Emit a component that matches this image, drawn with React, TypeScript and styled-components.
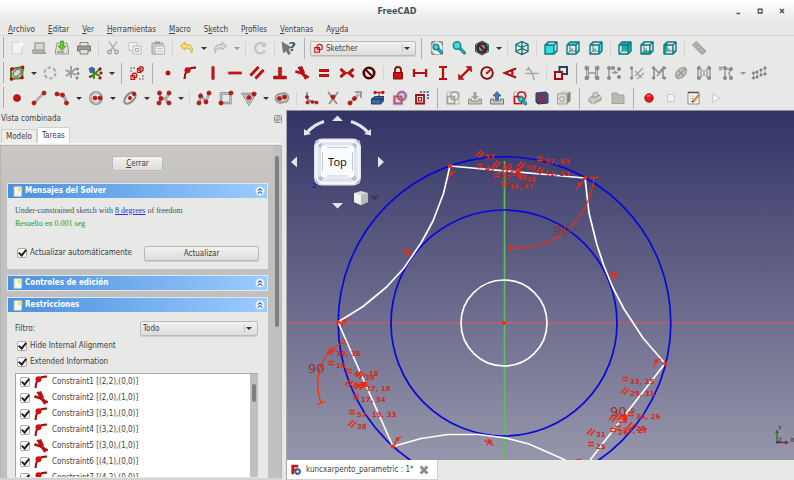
import React from "react";
import styled, { createGlobalStyle, css } from "styled-components";

const Global = createGlobalStyle`
  * { box-sizing: border-box; }
  body {
    margin: 0;
    background: #e8e8e6;
    color: #3c4143;
    font-family: "DejaVu Sans Condensed", "DejaVu Sans", sans-serif;
    font-size: 8px;
    line-height: 10px;
  }
  button, select, input { font: inherit; color: inherit; margin: 0; }
`;

/* ---------- window frame ---------- */

const Window = styled.div`
  display: flex;
  flex-direction: column;
  height: 100vh;
  overflow: hidden;
`;

const Head = styled.header`
  background: linear-gradient(#ffffff, #e8e8e6 22px);
`;

const TitleBar = styled.div`
  display: grid;
  grid-template-columns: 1fr auto 1fr;
  align-items: center;
  height: 22px;
`;

const Title = styled.h1`
  grid-column: 2;
  margin: 0;
  font: bold 9px/12px "DejaVu Sans Condensed", "DejaVu Sans", sans-serif;
  color: #43555c;
`;

const WindowButtons = styled.div`
  display: flex;
  justify-content: flex-end;
  gap: 14px;
  padding-right: 8px;
`;

const PlainButton = styled.button`
  display: flex;
  padding: 0;
  border: 0;
  background: none;
`;

const MenuBar = styled.nav`
  display: flex;
  gap: 13px;
  height: 14px;
  padding: 2px 8px 0;
  border-bottom: 1px solid #d5d5d2;
`;

const MenuItem = styled.button`
  padding: 0;
  border: 0;
  background: none;
  line-height: 10px;
`;

/* ---------- toolbars ---------- */

const ToolBars = styled.div`
  display: grid;
  grid-auto-rows: 25px;
  margin-bottom: -1px;
`;

const ToolRow = styled.div`
  display: flex;
  align-items: center;
  padding: 0 0 1px 6px;
  background: linear-gradient(#aaa, #aaa) 3px 1px / 1px 21px no-repeat;
`;

const Group = styled.div<{ $w: number }>`
  display: flex;
  flex: 0 0 ${(p) => p.$w}px;
`;

const Tool = styled.button`
  display: flex;
  flex: 1;
  justify-content: center;
  padding: 0;
  border: 0;
  background: none;
`;

const Sep = styled.span<{ $strong?: boolean }>`
  flex: 0 0 ${(p) => (p.$strong ? 9 : 7)}px;
  height: ${(p) => (p.$strong ? 21 : 15)}px;
  background: linear-gradient(${(p) => (p.$strong ? "#b0b0ae, #b0b0ae" : "#d4d4d2, #d4d4d2")}) center / 1px 100% no-repeat;
`;

const MoreButton = styled.button<{ $dim?: boolean }>`
  display: flex;
  justify-content: center;
  flex: 0 0 11px;
  padding: 0;
  border: 0;
  background: none;
  &::before {
    content: "";
    border: 3px solid transparent;
    border-bottom: 0;
    border-top: 3px solid ${(p) => (p.$dim ? "#999" : "#333")};
  }
`;

const raised = css`
  border: 1px solid #b9b9b7;
  border-radius: 2px;
  background: linear-gradient(#f2f2f1, #dcdcda);
  box-shadow: 0 1px 0 #cfcfcd;
`;

const Combo = styled.div<{ $icon?: boolean }>`
  position: relative;
  flex: 0 0 ${(p) => (p.$icon ? 106 : 118)}px;
  margin: 0 ${(p) => (p.$icon ? 1 : 0)}px;
  select {
    ${raised}
    appearance: none;
    display: block;
    width: 100%;
    height: 15px;
    padding: 0 16px 0 ${(p) => (p.$icon ? 15 : 2)}px;
    line-height: 13px;
  }
  svg {
    position: absolute;
    left: 3px;
    top: 2px;
  }
  &::after {
    content: "";
    position: absolute;
    right: 6px;
    top: 6px;
    border: 3px solid transparent;
    border-bottom: 0;
    border-top: 3px solid #333;
    pointer-events: none;
  }
  &::before {
    content: "";
    position: absolute;
    right: 13px;
    top: 4px;
    width: 1px;
    height: 7px;
    background: #c2c2c0;
  }
`;

/* ---------- dock ---------- */

const Work = styled.main`
  display: flex;
  flex: 1;
  min-height: 0;
`;

const Dock = styled.aside`
  display: flex;
  flex-direction: column;
  flex: 0 0 282px;
  margin-right: 4px;
  border-bottom: 2px solid #d3d3d1;
`;

const DockTitle = styled.div`
  display: flex;
  align-items: center;
  justify-content: space-between;
  height: 17px;
  padding: 0 0 0 1px;
`;

const Tabs = styled.div`
  display: flex;
  align-items: flex-end;
  height: 17px;
  padding-left: 1px;
  border-bottom: 1px solid #f6f6f5;
`;

const Tab = styled.button<{ $active?: boolean }>`
  height: ${(p) => (p.$active ? 16 : 14)}px;
  padding: 0 4px;
  border: 1px solid #cfcfcd;
  border-bottom: 0;
  border-radius: 2px 2px 0 0;
  background: ${(p) => (p.$active ? "#fff" : "#eeeeed")};
`;

const TaskArea = styled.div`
  display: flex;
  flex: 1;
  min-height: 0;
  margin-top: 1px;
  border: 1px solid #b5b5b3;
  border-width: 1px 1px 0;
  background: linear-gradient(#cbc7c4, #bfc0bf 60px);
`;

const Tasks = styled.div`
  display: flex;
  flex-direction: column;
  flex: 1;
  gap: 6px;
  min-width: 0;
  padding: 10px 5px 0 6px;
  overflow: hidden;
`;

const Track = styled.div`
  flex: 0 0 8px;
  padding: 10px 2px 0;
  background: #bfc1c0;
`;

const Thumb = styled.div<{ $h: string }>`
  height: ${(p) => p.$h};
  border-radius: 2px;
  background: #7b8081;
`;

const PushButton = styled.button`
  ${raised}
  height: 15px;
  padding: 0 13px;
  line-height: 13px;
`;

const CloseButton = styled(PushButton)`
  align-self: center;
  margin-bottom: 6px;
`;

const Section = styled.section<{ $fill?: boolean }>`
  display: flex;
  flex-direction: column;
  flex: ${(p) => (p.$fill ? "1" : "none")};
  min-height: 0;
  background: #e8e8e6;
  border: 1px solid #dfe7f0;
  border-bottom-color: #e8e8e6;
`;

const SectionHead = styled.h2`
  display: flex;
  align-items: center;
  gap: 2px;
  height: 14px;
  margin: 0;
  padding: 0 2px 0 4px;
  background: linear-gradient(90deg, #4a90dc, #9ccbff);
  color: #fff;
  font-size: 8px;
  font-weight: bold;
  span { flex: 1; }
`;

const SolverBody = styled.div`
  padding: 8px 8px 7px 7px;
`;

const Message = styled.p<{ $ok?: boolean }>`
  margin: 0;
  padding-bottom: ${(p) => (p.$ok ? 16 : 3)}px;
  font: 8px/10px "Liberation Serif", serif;
  color: ${(p) => (p.$ok ? "#1f9a24" : "#4b4f50")};
  a { color: #2f2fe0; }
`;

const Row = styled.div`
  display: flex;
  align-items: center;
  justify-content: space-between;
`;

const WideButton = styled(PushButton)`
  flex: 0 0 115px;
`;

const Check = styled.label`
  display: flex;
  align-items: center;
  gap: 3px;
  height: 16px;
`;

const Box = styled.input`
  appearance: none;
  display: flex;
  flex: none;
  align-items: center;
  justify-content: center;
  width: 10px;
  height: 10px;
  margin: 0 0 0 2px;
  border: 1px solid #a9a9a7;
  border-radius: 2px;
  background: #fdfdfd;
  &:checked::before {
    content: "";
    width: 3px;
    height: 6px;
    margin-bottom: 2px;
    border: solid #222;
    border-width: 0 2px 2px 0;
    transform: rotate(40deg);
  }
`;

const FilterBody = styled.div`
  display: flex;
  flex-direction: column;
  flex: 1;
  min-height: 0;
  padding: 9px 9px 0 7px;
`;

const FilterRow = styled(Row)`
  margin-bottom: 2px;
`;

const ListFrame = styled.div`
  display: flex;
  flex: 1;
  min-height: 0;
  margin-top: 3px;
  border: 1px solid #a9a9a7;
  border-width: 1px 0 0 1px;
  background: #fff;
`;

const List = styled.ul`
  flex: 1;
  margin: 0;
  padding: 0 2px;
  overflow: hidden;
  list-style: none;
`;

/* ---------- drawing area ---------- */

const Mdi = styled.div`
  display: flex;
  flex-direction: column;
  flex: 1;
  min-width: 0;
  border-left: 1px solid #a9a9ad;
`;

const Scene = styled.div`
  flex: 1;
  min-height: 0;
  border-top: 1px solid #8c8ca0;
  background: linear-gradient(#333366, #9696ab);
  svg { display: block; width: 100%; height: 100%; }
`;

const DocBar = styled.div`
  display: flex;
  height: 20px;
`;

const DocTab = styled.div`
  display: flex;
  align-items: center;
  gap: 5px;
  height: 20px;
  padding: 0 8px 0 3px;
  border: 1px solid #d0d0ce;
  border-top: 0;
  border-left: 0;
  background: #fff;
`;

/* ---------- icons ---------- */

const RED = "#cc1111";
const DK = "#7c0a0a";
const GR = "#959592";

const Svg = ({ children, s = 16 }: { children: React.ReactNode; s?: number }) => (
  <svg width={s} height={s} viewBox="0 0 16 16" fill="none" aria-hidden="true">
    {children}
  </svg>
);

const Dots = ({ at, r = 2.1, c = RED, e = DK }: { at: number[][]; r?: number; c?: string; e?: string }) => (
  <>
    {at.map(([x, y], i) => (
      <circle key={i} cx={x} cy={y} r={r} fill={c} stroke={e} strokeWidth=".5" />
    ))}
  </>
);

const Bar = ({ d, w = 1.8, c = RED, e = DK }: { d: string; w?: number; c?: string; e?: string }) => (
  <>
    <path d={d} stroke={e} strokeWidth={w + 0.7} />
    <path d={d} stroke={c} strokeWidth={w} />
  </>
);

const Rail = ({ d }: { d: string }) => (
  <>
    <path d={d} stroke="#858583" strokeWidth="2.4" />
    <path d={d} stroke="#c4c4c2" strokeWidth="1.2" />
  </>
);

const GDots = ({ at, r = 1.7 }: { at: number[][]; r?: number }) => <Dots at={at} r={r} c="#8c8c8a" e="#777775" />;

const No = () => (
  <>
    <circle cx="8" cy="8" r="4.500" stroke="#3a0505" strokeWidth="2.600" />
    <circle cx="8" cy="8" r="4.500" stroke="#a01010" strokeWidth="1.400" />
    <path d="M5 5 11 11" stroke="#7a0808" strokeWidth="1.800" />
  </>
);

const Lens = ({ x = 7, y = 7, r = 3 }: { x?: number; y?: number; r?: number }) => (
  <>
    <path d={`M${x + r * 0.6} ${y + r * 0.6} L${x + r * 2} ${y + r * 2}`} stroke="#0d6c72" strokeWidth="3.2" strokeLinecap="round" />
    <path d={`M${x + r * 0.6} ${y + r * 0.6} L${x + r * 2} ${y + r * 2}`} stroke="#1cb8bd" strokeWidth="1.8" strokeLinecap="round" />
    <circle cx={x} cy={y} r={r} fill="#53d5d8" stroke="#128c91" strokeWidth="1.6" />
  </>
);

const faces: Record<string, string> = {
  front: "M2 5H11V14H2Z",
  top: "M2 5 5 2H14L11 5Z",
  right: "M11 5 14 2V11L11 14Z",
  rear: "M5 2H14V11H5Z",
  bottom: "M2 14 5 11H14L11 14Z",
  left: "M2 5 5 2V11L2 14Z",
};

const Cube = ({ face, mark }: { face: string; mark?: boolean }) => (
  <>
    <path d="M5 2V11M5 11H14M5 11 2 14" stroke="#2a9ba0" strokeWidth="1" />
    <path d={faces[face]} fill={face === "left" || face === "rear" || face === "bottom" ? "#19aeb4" : "#2ce0e4"} />
    <path d="M2 5H11V14H2ZM2 5 5 2H14L11 5M14 2V11L11 14" stroke="#0f777c" strokeWidth="1.4" strokeLinejoin="round" />
    {mark && <path d="M5 8 8 11M8 8 5 11.5" stroke="#777" strokeWidth=".8" />}
  </>
);

const Sketch = ({ c = RED, e = "none" }: { c?: string; e?: string }) => (
  <>
    <path d="M2.5 6.500H9.500V13.500H2.500Z" stroke={c} strokeWidth="1.6" />
    <circle cx="9.500" cy="6" r="4" stroke={c} strokeWidth="1.6" fill={e} fillOpacity=".4" />
    <path d="M6 10 10 6" stroke={c} strokeWidth="1" />
  </>
);

const Corner = () => (
  <>
    <path d="M2.500 14Q2.500 9 5 5.500 8 2.500 14 2.500" stroke={DK} strokeWidth="2" />
    <path d="M2.800 13.500Q3 9 5.500 6 8 3 13.500 2.700" stroke={RED} strokeWidth="1" />
    <circle cx="5.500" cy="5.200" r="3" fill={RED} />
  </>
);

const Tangent = () => (
  <>
    <Bar d="M1.500 6.500 7 8 14.500 12.500" w={1.8} />
    <Bar d="M4.500 2 8 7.500 12 14M7 1.500 10 8" w={1.5} />
  </>
);

const I: Record<string, React.ReactNode> = {
  new: (<><path d="M3 2H10L13 5V14H3Z" fill="#f2f2f0" stroke="#cececb" /><path d="M12 1V7M9 4H15" stroke="#fafafa" strokeWidth="2" /></>),
  open: (<><path d="M4 3H13V11H4Z" fill="#d6d6d3" stroke="#a4a4a1" strokeWidth="1.500" /><path d="M1 10H12L15 13.500H2Z" fill="#b2b2af" stroke="#9a9a97" /></>),
  save: (<><path d="M3 3H13L14.500 11V14H1.500V11Z" fill="#dededb" stroke="#999996" /><path d="M3 12H10" stroke="#72726f" /><path d="M6.500 1H9.500V6H12L8 10.500 4 6H6.500Z" fill="#6cc92a" stroke="#439410" strokeWidth=".7" /></>),
  print: (<><path d="M4 2.500H12V7H4Z" fill="#e9e9e7" stroke="#888885" /><path d="M1.500 6H14.500V11H1.500Z" fill="#9b9b98" stroke="#767673" /><path d="M4 9.500H12V14H4Z" fill="#dededb" stroke="#858582" /></>),
  cut: (<><path d="M4 1.500 10.500 11M12 1.500 5.500 11" stroke="#b4b4b1" strokeWidth="1.500" /><circle cx="4.500" cy="12" r="1.800" stroke="#9b9b98" strokeWidth="1.300" /><circle cx="11.500" cy="12" r="1.800" stroke="#9b9b98" strokeWidth="1.300" /></>),
  copy: (<><path d="M2 2.500H10V10.500H2Z" fill="#f1f1ef" stroke="#c5c5c2" /><path d="M6 6H14V14H6Z" fill="#f1f1ef" stroke="#bbbbb8" /><path d="M8.500 8.500H11.500V11.500H8.500Z" stroke="#aaaaa7" /></>),
  paste: (<><path d="M2 3H13V14H2Z" fill="#c9c9c6" stroke="#a3a3a0" /><path d="M5 1.500H10V4H5Z" fill="#999" /><path d="M5 6H14.500V14H5Z" fill="#efefed" stroke="#b5b5b2" /><path d="M7 8.500H12.500M7 11H12.500" stroke="#c2c2bf" /></>),
  undo: (<><path d="M1.500 6 6 2V4.500C12 4 15 7.500 12.500 13 12.500 9.500 10 8 6 8V10Z" fill="#f6e26b" stroke="#c9ab2c" strokeWidth=".9" /></>),
  redo: (<><path d="M14.500 6 10 2V4.500C4 4 1 7.500 3.500 13 3.500 9.500 6 8 10 8V10Z" fill="#d9d9d6" stroke="#aaaaa7" strokeWidth=".9" /></>),
  refresh: (<><path d="M12.500 5A5.200 5.200 0 1 0 13 10.500" stroke="#c4c4c1" strokeWidth="2.400" /><path d="M14 1.500V7H8.500Z" fill="#c4c4c1" /></>),
  whats: (<><path d="M1 2 10 7.500 7 9 9.500 13.500 7.500 14.500 5 10.500 2.500 13Z" fill="#777" stroke="#555" strokeWidth=".6" /><text x="7.500" y="11" fontSize="13" fontWeight="bold" fill="#3c5678" fontFamily="DejaVu Sans">?</text></>),
  fit: (<><path d="M2.500 1.500H13.500V14.500H2.500Z" fill="#f0f0ee" stroke="#b4b4b1" /><path d="M3 5V2H6M10 2H13V5M3 11V14H6" stroke="#6b6b68" /><Lens x={7} y={7} r={2.8} /></>),
  zoom: <Lens x={6} y={5.500} r={3.700} />,
  style: (<><path d="M8 1 14.500 4.500V11.500L8 15 1.500 11.500V4.500Z" fill="#2fb4b9" stroke="#147177" /><No /></>),
  iso: (<><path d="M8 1.500 14 4.500V11.500L8 14.500 2 11.500V4.500ZM2 4.500 8 7.500 14 4.500M8 7.500V14.500M8 1.500V8M2 11.500 8 8.500 14 11.500" stroke="#0d6c72" strokeWidth="1.300" /><path d="M3 5 8 7.500 13 5" stroke="#37b9be" strokeWidth=".6" /></>),
  measure: (<><path d="M1.500 5 5 1.500 14.500 10.500V12L11 14.500Z" fill="#b5b5b2" stroke="#969693" /><path d="M5 7 7 5M7.500 9.500 9.500 7.500M10 12 12 10" stroke="#858582" strokeWidth=".8" /></>),

  newSketch: (<><path d="M2 4 14 2 13 13 2 14Z" fill="#d6d9d4" stroke="#4c8a17" strokeWidth="2" /><ellipse cx="8" cy="8" rx="4.500" ry="2.800" transform="rotate(-40 8 8)" stroke="#777" strokeWidth="1.300" /><Dots at={[[3, 4], [13.500, 2.500], [2.500, 14], [13, 12.500]]} r={1.600} /></>),
  leave: (<><circle cx="8" cy="8" r="5.500" stroke="#ababa8" strokeWidth="2.200" strokeDasharray="3.500 2.200" /></>),
  burst: (<><path d="M7 1V13M1.500 5 12 10M12 3.500 2 11" stroke="#9a9a97" strokeWidth="1.800" /><GDots at={[[13.500, 4], [14, 8.500], [13, 13]]} r={1.200} /></>),
  burstC: (<><path d="M7 3V14M3 6 13 11M14 3 4 12" stroke="#3e9320" strokeWidth="2" /><path d="M1.500 3.500 5 1.500 8 4 7 8 3 8Z" fill="#3c6a9f" /><path d="M2 12 5 11" stroke="#aa2211" strokeWidth="2" /><Dots at={[[13, 4], [14, 8], [13, 13]]} r={1.300} /></>),
  valid: (<><path d="M2 7V3H6M10 14H14V10" stroke="#888" strokeWidth="1.400" strokeDasharray="2 1" /><path d="M8.500 3.500H12V7.500H8.500ZM2 10.500H5.500V14.500H2Z" stroke={RED} strokeWidth="1.200" /><circle cx="12" cy="4" r="2.300" stroke={RED} strokeWidth="1.200" /><circle cx="5.500" cy="10.500" r="2.300" stroke={RED} strokeWidth="1.200" /></>),
  cPoint: <Dots at={[[8, 8]]} r={2.2} />,
  cOn: <Corner />,
  cV: <Bar d="M8 1.500V14.500" w={2.200} />,
  cH: <Bar d="M1.500 8H14.500" w={2} />,
  cPar: <><Bar d="M1.500 10.500 9.500 2" w={2} /><Bar d="M6.500 13.500 14.500 5" w={2} /></>,
  cPerp: <Bar d="M8 2V12.500M1.500 12.500H14.500" w={2.600} />,
  cTan: <Tangent />,
  cEq: <Bar d="M3 5.500H13M3 10.500H13" w={2.400} />,
  cSym: <><Bar d="M1.500 4 6 8 1.500 12M14.500 4 10 8 14.500 12" w={2.200} /><circle cx="8" cy="8" r="1" fill={RED} /></>,
  cBlock: (<><circle cx="8" cy="8" r="5.200" stroke="#300" strokeWidth="2.600" /><circle cx="8" cy="8" r="5.200" stroke="#700" strokeWidth="1" /><path d="M4.500 4.500 11.500 11.500" stroke="#500" strokeWidth="2" /></>),
  lock: (<><path d="M5 8V5Q5 2 8 2 11 2 11 5V8" stroke="#8c0d0d" strokeWidth="1.800" /><path d="M3.500 7.500H12.500V14H3.500Z" fill={RED} stroke={DK} /></>),
  hDist: <Bar d="M2 4V12M14 4V12M2 8H14" w={1.500} />,
  vDist: <Bar d="M4 2H12M4 14H12M8 2V14" w={1.500} />,
  dist: (<><Bar d="M4 12 12 4" w={1.600} /><path d="M14.500 1.500V7L9 1.500ZM1.500 14.500V9L7 14.500Z" fill={RED} stroke={DK} strokeWidth=".5" /></>),
  radius: (<><circle cx="8" cy="8" r="5.800" stroke={DK} strokeWidth="1.800" /><path d="M8 8 11.500 5" stroke={RED} strokeWidth="1.800" /><circle cx="8" cy="8" r="1.300" fill={RED} /></>),
  angle: <Bar d="M14 3.500 2.500 8 14 12.500M9.500 5.500Q11.500 8 9.500 10.500" w={1.300} />,
  snell: (<><path d="M1 8.500H15M4 2 8.500 8.500 10 15M2 5 6 4" stroke="#a8a8a5" strokeWidth="1.500" /></>),
  ref: (<><path d="M6.500 2H14V9H6.500Z" stroke="#27406b" strokeWidth="2" /><path d="M2 7H9V14H2Z" stroke="#a51010" strokeWidth="2" fill="#e8e8e6" /></>),
  g1: (<><Rail d="M3.500 3V13M12.500 3V13" /><path d="M4 8H12" stroke={GR} strokeWidth="1.500" /><GDots at={[[2.800, 3], [2.800, 13], [13.200, 3], [13.200, 13]]} r={2} /></>),
  g2: (<><path d="M3 4V12M6 7.500H12M9 5.500V9" stroke={GR} strokeWidth="1.500" /><GDots at={[[3, 3], [3, 13], [7, 3], [13, 4], [13, 12]]} /></>),
  g3: (<><path d="M3 2V14M6 11 14 3M8 14 15 8M6 6 13 13" stroke="#a6a6a3" strokeWidth="1.600" /><GDots at={[[2.500, 3], [2.500, 13]]} r={1.300} /></>),
  g4: (<><path d="M3 14V3L8 8 12 3V14M6 11 13 3" stroke="#949491" strokeWidth="1.700" /><GDots at={[[2.500, 3], [13.500, 3], [2.500, 13], [13.500, 13]]} r={1.300} /></>),
  g5: (<><ellipse cx="8" cy="8" rx="6.500" ry="4" transform="rotate(-45 8 8)" fill="#c8c8c5" stroke="#a3a3a0" strokeWidth="1.500" /><path d="M4 12 12 4M6 6 11 11" stroke={GR} strokeWidth="1.500" /></>),
  g6: (<><path d="M2 3V13M6 4Q3.500 8 6 12M14 3V13M10 4Q12.500 8 10 12M8 5V11" stroke={GR} strokeWidth="1.300" /><GDots at={[[3, 3], [3, 13], [13, 3], [13, 13]]} /></>),
  g7: (<><path d="M1 2.500H5M1 4.500H4M7 4V12M7 4H14M13 5Q9 8 13 12" stroke={GR} strokeWidth="1.400" /><GDots at={[[7, 3], [7, 13], [13, 4], [13, 13]]} /></>),
  g8: (<><path d="M2.500 8V13M6 7V12M10 5V10M14 3V9" stroke="#aaa" /><GDots at={[[2.500, 8], [2.500, 13], [6, 7], [6, 12], [10, 5], [10, 10], [14, 3], [14, 9]]} r={1.300} /></>),

  point: <Dots at={[[8, 8]]} r={3.600} />,
  line: <><Rail d="M3 13 13 3" /><Dots at={[[3, 13], [13, 3]]} /></>,
  arc: <><Rail d="M3 4Q11 4 12.500 12.500" /><Dots at={[[3, 4], [8.500, 5], [12.500, 13]]} /></>,
  circle: <><circle cx="8" cy="8" r="5.800" stroke="#8b8b88" strokeWidth="2.200" /><circle cx="8" cy="8" r="5.800" stroke="#bdbdba" strokeWidth="1" /><Dots at={[[7, 8], [12, 8]]} /></>,
  conic: <><ellipse cx="8" cy="8" rx="7" ry="4" transform="rotate(-45 8 8)" stroke="#8b8b88" strokeWidth="2" /><Dots at={[[8, 8], [12, 4]]} r={1.700} /></>,
  bspline: <><Rail d="M3 13Q6 6 8 8.500 10 10 13 3M3 4 5 8M12 13 10 10" /><Dots at={[[3.500, 3], [13, 3], [3, 13], [13, 13], [5, 8.500]]} /></>,
  poly: <><Rail d="M3 13 5 5 10 12 13 3" /><Dots at={[[3, 13], [4.500, 6], [10, 12], [13, 3]]} /></>,
  rect: <><Rail d="M3 3.500H12.500V13H3Z" /><Dots at={[[13, 3], [3, 13]]} /></>,
  tri: <><Rail d="M2 4H14L8 14Z" /><Dots at={[[8, 7.500], [13, 4]]} /></>,
  slot: <><rect x="1.500" y="3.500" width="13" height="9" rx="4.500" transform="rotate(-8 8 8)" stroke="#989895" strokeWidth="1.800" fill="#c8c8c5" /><Dots at={[[5.500, 8.500], [10.500, 7]]} /></>,
  fillet: <><path d="M4 2V8Q5 12 14 12" stroke="#777" strokeWidth="1.400" /><Dots at={[[4, 7], [4.500, 12.500], [9.500, 12], [13.500, 12.500]]} r={1.600} /></>,
  trim: <><path d="M3 2 12 14M13 2 4 14" stroke="#8b8b88" strokeWidth="1.600" /><Dots at={[[8, 7]]} /></>,
  extend: <><Rail d="M4 12 12 4" /><path d="M8 2H14V8" stroke="#8b8b88" strokeWidth="1.700" /><Dots at={[[3, 13], [7.500, 8.500]]} /></>,
  external: (<><path d="M1.500 9 5 6.500H14L11 9ZM1.500 9H11V14H1.500Z" fill="#3a6ca5" stroke="#1e3e6b" /><path d="M11 9 14 6.500V11L11 14Z" fill="#264f82" /><path d="M9 3V8" stroke="#444" /><path d="M5 2.500H13" stroke={RED} strokeWidth="1.500" /><Dots at={[[5, 2.500], [13, 2.500]]} r={1.300} /></>),
  carbon: (<><g stroke="#a3b5ea" strokeWidth="3.500"><path d="M2.500 6.500H9.500V13.500H2.500Z" /><circle cx="10" cy="6" r="4" /></g><Sketch c="#d04a5c" /></>),
  construct: (<><path d="M6 2H14V9" stroke="#24508c" strokeWidth="1.700" strokeDasharray="2 1.300" /><path d="M2 5H10V13.500H2Z" stroke="#9c1111" strokeWidth="1.800" /><path d="M4.500 7.500H7.500V11H4.500Z" stroke="#9c1111" strokeWidth="1.200" /></>),
  skGrey: (<><path d="M2 2H14V14H2Z" fill="#ececea" stroke="#b4b4b1" /><Sketch c="#a1a19e" /></>),
  imp: (<><path d="M1.500 9H4.500V11H11.500V9H14.500V14H1.500Z" fill="#c4c4c1" stroke="#90908d" /><path d="M6.500 2H9.500V6H12L8 10 4 6H6.500Z" fill="#a1a19e" /></>),
  exp: (<><path d="M1.500 9H4.500V11H11.500V9H14.500V14H1.500Z" fill="#c9c9c6" stroke="#777774" /><path d="M6.500 10H9.500V6H12L8 1.500 4 6H6.500Z" fill="#4679b4" stroke="#234c80" strokeWidth=".7" /></>),
  viewSk: (<><path d="M2 2H14V14H2Z" fill="#f1f1ef" stroke="#b4b4b1" /><Sketch /><Lens x={9} y={9} r={2.300} /></>),
  viewSec: (<><path d="M2 3 12 2 14 4V13L4 14 2 12Z" fill="#315a92" stroke="#1e3864" /><path d="M4 5H11V12H4Z" stroke="#a21a31" strokeWidth="1.400" /><path d="M5 11 10 6M6 6 10 11" stroke="#a21a31" /></>),
  map: (<><path d="M1.500 4 5 1.500H14.500L11 4Z" fill="#c9c9c6" /><path d="M11 4 14.500 1.500V11L11 14Z" fill="#848481" /><path d="M1.500 4H11V14H1.500Z" fill="#dcdcd9" stroke="#a0a09d" /><circle cx="6" cy="9" r="2.500" stroke="#a0a09d" /></>),
  part: (<><path d="M2 8 6 6 8 7.500 12 5 14 6.500V10L6 14 2 11.500Z" fill="#bcbcb9" stroke="#989895" /><path d="M6 6V3.500L9 2 11 3.500V6L8 7.500Z" fill="#d3d3d0" stroke="#989895" /><path d="M6 14V10.500L14 6.500M6 10.500 2 8" stroke="#e8e8e6" strokeWidth=".8" /></>),
  folder: (<path d="M2 3H7L8.500 5H14V13.500H2Z" fill="#b9b9b6" stroke="#a2a29f" />),
  rec: (<><circle cx="8" cy="8" r="4.300" fill="#e21919" stroke="#b50e0e" strokeWidth=".8" /><ellipse cx="7.500" cy="6" rx="2" ry="1" fill="#f27070" /></>),
  stop: (<path d="M4.500 4.500H11.500V11.500H4.500Z" fill="#f3f3f1" stroke="#c9c9c6" />),
  edit: (<><path d="M2 2.500H13V14H2Z" fill="#fbfbf9" stroke="#8a8a87" /><path d="M2 2.500H13" stroke="#555" strokeWidth="1.600" /><path d="M4 6H9M4 8.500H8M4 11H11" stroke="#b9b9b6" /><path d="M7 11.500 13.500 4.500" stroke="#e8852a" strokeWidth="2.300" /><path d="M6 12.500 7.500 11" stroke="#444" strokeWidth="1.300" /></>),
  play: (<path d="M4.500 3.500 12 8 4.500 12.500Z" fill="#f2f2f0" stroke="#c9c9c6" />),
};
["front", "top", "right", "rear", "bottom", "left"].forEach((f) => {
  I[f] = <Cube face={f} mark={f !== "front" && f !== "rear"} />;
});

type Item = { w: number; icons: string[] } | "|" | "||" | "v" | "vd" | "combo";
const g = (w: number, names: string): Item => ({ w, icons: names.split(" ") });

const toolRows: Item[][] = [
  [g(89, "new open save print"), "|", g(67, "cut copy paste"), "|", g(22, "undo"), "v", g(22, "redo"), "vd", "|", g(22, "refresh"), "|", g(22, "whats"), "||", "combo", "||", g(67, "fit zoom style"), "v", "|", g(22, "iso"), "|", g(67, "front top right"), "|", g(67, "rear bottom left"), "|", g(22, "measure")],
  [g(22, "newSketch"), "v", g(67, "leave burst burstC"), "v", "||", g(22, "valid"), "||", g(223, "cPoint cOn cV cH cPar cPerp cTan cEq cSym cBlock"), "|", g(156, "lock hDist vDist dist radius angle snell"), "|", g(22, "ref"), "||", g(156, "g1 g2 g3 g4 g5 g6 g7"), "vd", g(22, "g8")],
  [g(67, "point line arc"), "v", g(23, "circle"), "v", g(23, "conic"), "v", g(23, "bspline"), "v", "|", g(67, "poly rect tri"), "v", g(22, "slot"), "|", g(133, "fillet trim extend external carbon construct"), "||", g(133, "skGrey imp exp viewSk viewSec map"), "||", g(45, "part folder"), "||", g(89, "rec stop edit play")],
];

const ToolBar = ({ items }: { items: Item[] }) => (
  <ToolRow role="toolbar">
    {items.map((it, i) => {
      if (it === "|") return <Sep key={i} />;
      if (it === "||") return <Sep key={i} $strong />;
      if (it === "v" || it === "vd") return <MoreButton key={i} $dim={it === "vd"} aria-label="more" />;
      if (it === "combo")
        return (
          <Combo key={i} $icon>
            <select aria-label="workbench"><option>Sketcher</option></select>
            <Svg s={11}><Sketch /></Svg>
          </Combo>
        );
      return (
        <Group key={i} $w={it.w}>
          {it.icons.map((n) => (
            <Tool key={n} aria-label={n}><Svg>{I[n]}</Svg></Tool>
          ))}
        </Group>
      );
    })}
  </ToolRow>
);

/* ---------- sketch scene ---------- */

const INK = "#ff2a00";
const SYM = "#f02a10";
const TXT = "#d42a1c";

type Note = [string, number, number, string?];
const notes: Note[] = [
  ["p", 480, 154, "53"], ["e", 480, 166, "49"], ["p", 497, 164, "50"], ["p", 521, 165, "50"],
  ["e", 497, 175, "57, 48"], ["p", 505, 171, "53"], ["e", 504, 184, "46, 47"], ["e", 521, 177, "48"],
  ["e", 540, 159, "57, 49"], ["p", 540, 171, "51, 53"],
  ["p", 331, 351, "39, 38"], ["e", 331, 363, "19"], ["e", 349, 371, "46, 18"], ["p", 360, 375, "39"],
  ["p", 349, 383, "38"], ["p", 356, 386], ["p", 361, 386, "37, 18"], ["e", 356, 397, "17, 34"],
  ["e", 352, 412, "57, 19, 33"], ["p", 352, 424, "38"],
  ["e", 625, 379, "33, 25"], ["p", 625, 391, "29, 31"], ["p", 613, 418, "28"], ["p", 618, 417],
  ["e", 631, 414, "34, 26"], ["p", 631, 426, "28"], ["e", 618, 428, "26, 27"], ["e", 613, 430, "27"],
  ["p", 591, 432, "31"], ["e", 591, 444, "25"],
];

const Viewport = () => (
  <svg viewBox="287 111 507 349" preserveAspectRatio="xMidYMid slice" fill="none" role="img" aria-label="3D view">
    <path d="M504.500 161V460" stroke="#5bbf5b" strokeWidth="1.600" />
    <path d="M100 323H1000" stroke="#c45a68" strokeWidth="1.400" />
    <g stroke="#0808d8" strokeWidth="1.700">
      <circle cx="504" cy="323" r="113" />
      <circle cx="504.500" cy="323" r="166.300" />
    </g>
    <g stroke="#fff" strokeWidth="1.700" strokeLinejoin="round">
      <circle cx="504" cy="323" r="43" />
      <path d="M450 166 585 178" />
      <path d="M450 166 443.500 193.500 433 221 421 243 404 268 386 287.500 363 306.500 338 322 393 446.500" />
      <path d="M585 178 589 213 597 245 604 266 613 288 624 309 643 338 665 363.500 590 460" />
      <path d="M393 446.500 421 438.500 448 434.500 479 434.500 506 438 529 444 546 451.500 563 459 570 463" />
    </g>
    <g fill={INK}>
      {[[450, 166], [585, 178], [665, 363.5], [393, 446.5], [338, 322], [504, 323]].map(([x, y]) => (
        <circle key={x} cx={x} cy={y} r="2.100" />
      ))}
      <circle cx="518" cy="171" r="2.800" /><circle cx="364.500" cy="384.500" r="3" /><circle cx="624.500" cy="417" r="3" />
    </g>
    <g stroke={INK} strokeWidth="1.200">
      <path d="M510.500 244V251M510.500 248Q540 248.500 562 235M572 226Q591 205 594 178M590 177.500H598.500" />
      <path d="M343 338 346.500 345M345 342Q326 349 319.500 370 315.500 388 321 403M317.500 404.500 325 401.500" />
    </g>
    {[[449, 171], [577, 182], [342, 319], [395, 437], [654, 359], [574, 459]].map(([x, y]) => (
      <g key={x} transform={`translate(${x} ${y})`}>
        <path d="M0 8Q0 1 7 0" stroke={SYM} strokeWidth="1.200" />
        <path d="M0 1 5 0 3 5Z" fill={SYM} />
      </g>
    ))}
    {[[407, 252], [614, 275], [489, 442]].map(([x, y]) => (
      <path key={x} transform={`translate(${x} ${y})`} d="M-4.500-1.500 0 0 4 3.500M-1-3 1 0 3 1M-2 3 0 0 3-2" stroke={SYM} strokeWidth="1.400" />
    ))}
    {notes.map(([k, x, y, t], i) => (
      <g key={i}>
        <path
          transform={`translate(${x} ${y})`}
          d={k === "e" ? "M-3-1.500H3M-3 1.500H3" : "M-4 2 1-3.500M-1 3.500 4-2"}
          stroke={SYM}
          strokeWidth="1.700"
        />
        {t && <text x={x + 5} y={y + 5} fill={TXT} fontSize="7" fontWeight="bold" fontFamily="DejaVu Sans">{t}</text>}
      </g>
    ))}
    <g fill="#97302f" fontFamily="DejaVu Sans" fontSize="13">
      <text x="554" y="235">90</text><text x="574" y="235" fontSize="11">°</text>
      <text x="308" y="373">90</text>
      <text x="610" y="416">90</text><text x="630" y="416" fontSize="11">°</text>
    </g>

    <rect x="314" y="138.500" width="47" height="47" rx="8" fill="#dfe4ee" />
    <path d="M317 142 322 147M358 142 353 147M317 182 322 177M358 182 353 177" stroke="#b5bdcf" strokeWidth="4" strokeLinecap="round" />
    <rect x="316.500" y="141" width="42" height="42" rx="7" stroke="#f7f9fc" strokeWidth="2" />
    <rect x="321" y="145.500" width="33" height="32" rx="2" fill="#fafbfd" />
    <path d="M327 147.500H348M327 176H348M322.500 152V171M352.500 152V171" stroke="#c5cad6" />
    <text x="337.500" y="166" textAnchor="middle" fontSize="11" fill="#15181c" fontFamily="Noto Sans">Top</text>
    <g fill="#e1e5ee">
      <path d="M332 121 337.500 115.500 343 121ZM332 203 337.500 208.500 343 203ZM297 156.500 291 162 297 167.500ZM378 156.500 384 162 378 167.500Z" />
      <path d="M304 135.500V129L311 134ZM371 135.500V129L364 134Z" />
    </g>
    <path d="M324 121.500Q314 124.500 307 132.500M351 121.500Q361 124.500 368 132.500" stroke="#e1e5ee" strokeWidth="3.200" />
    <text x="312" y="188" fontSize="8" fill="#1414d0" fontFamily="DejaVu Sans">z</text>
    <path d="M354 193 361 191 368 193V202L361 205 354 202Z" fill="#d8d8d6" />
    <path d="M354 193 361 195V205L354 202Z" fill="#f1f1ef" /><path d="M361 195 368 193V202L361 205Z" fill="#b9b9b8" />
    <path d="M370 195.500H379.500L375 200.500Z" fill="#3c3c44" />

    <path d="M777 442V432" stroke="#1b7a1b" strokeWidth="1.300" /><path d="M775 433 777 429.500 779 433Z" fill="#1b7a1b" />
    <path d="M777 442.500H787" stroke="#8c1f1f" strokeWidth="1.300" /><path d="M785 440.500 789 442.500 785 444.500Z" fill="#8c1f1f" />
    <circle cx="777" cy="442.500" r="1" fill="#1414d0" />
    <g fill="#25252c" fontFamily="DejaVu Sans" fontSize="6">
      <text x="778" y="430">Y</text><text x="778" y="442">Z</text><text x="790" y="442">X</text>
    </g>
  </svg>
);

/* ---------- task panel parts ---------- */

const SectionTitle = ({ children }: { children: string }) => (
  <SectionHead>
    <Svg s={11}>
      <path d="M3 1H14V15H3Z" fill="#f5f5f0" stroke="#c9c9c0" />
      <path d="M11 0 12.500 3.500 16 5 12.500 6.500 11 9 9.500 6.500 7 5 9.500 3.500Z" fill="#f5e94a" />
    </Svg>
    <span>{children}</span>
    <PlainButton aria-label={`Contraer ${children}`}>
      <Svg s={10}>
        <circle cx="8" cy="8" r="7.500" fill="#edf4fc" stroke="#b0cdee" />
        <path d="M4.500 7.500 8 4.500 11.500 7.500M4.500 12 8 9 11.500 12" stroke="#3c70b0" strokeWidth="1.700" />
      </Svg>
    </PlainButton>
  </SectionHead>
);

const constraints: [string, boolean][] = [
  ["Constraint1 [(2,2),(0,0)]", false],
  ["Constraint2 [(2,0),(1,0)]", true],
  ["Constraint3 [(3,1),(0,0)]", false],
  ["Constraint4 [(3,2),(0,0)]", false],
  ["Constraint5 [(3,0),(1,0)]", true],
  ["Constraint6 [(4,1),(0,0)]", false],
  ["Constraint7 [(4,2),(0,0)]", false],
];

const menus: [string, string, string][] = [
  ["", "A", "rchivo"], ["", "E", "ditar"], ["", "V", "er"], ["", "H", "erramientas"], ["", "M", "acro"],
  ["S", "k", "etch"], ["P", "r", "ofiles"], ["", "V", "entanas"], ["Ay", "u", "da"],
];

export default function App() {
  return (
    <Window>
      <Global />
      <Head>
        <TitleBar>
          <Title>FreeCAD</Title>
          <WindowButtons>
            <PlainButton aria-label="Minimizar"><Svg s={8}><path d="M5 13H12" stroke="#40545c" strokeWidth="3" /></Svg></PlainButton>
            <PlainButton aria-label="Maximizar"><Svg s={8}><path d="M4.500 4.500H12V12H4.500Z" stroke="#40545c" strokeWidth="2.600" /></Svg></PlainButton>
            <PlainButton aria-label="Cerrar ventana"><Svg s={8}><path d="M4 4 12 12M12 4 4 12" stroke="#40545c" strokeWidth="3" /></Svg></PlainButton>
          </WindowButtons>
        </TitleBar>
        <MenuBar>
          {menus.map(([a, u, b]) => (
            <MenuItem key={u + b}>{a}<u>{u}</u>{b}</MenuItem>
          ))}
        </MenuBar>
      </Head>
      <ToolBars>
        {toolRows.map((items, i) => <ToolBar key={i} items={items} />)}
      </ToolBars>
      <Work>
        <Dock>
          <DockTitle>
            <span>Vista combinada</span>
            <PlainButton aria-label="Flotar">
              <Svg s={8}>
                <rect x="1" y="1" width="14" height="14" rx="2" stroke="#858583" strokeWidth="1.800" />
                <path d="M6 4H12V10H6ZM4 7V12H9" stroke="#777" strokeWidth="1.500" />
              </Svg>
            </PlainButton>
          </DockTitle>
          <Tabs role="tablist">
            <Tab role="tab">Modelo</Tab>
            <Tab role="tab" $active aria-selected>Tareas</Tab>
          </Tabs>
          <TaskArea>
            <Tasks>
              <CloseButton><u>C</u>errar</CloseButton>
              <Section>
                <SectionTitle>Mensajes del Solver</SectionTitle>
                <SolverBody>
                  <Message>Under-constrained sketch with <a href="#dof">8 degrees</a> of freedom</Message>
                  <Message $ok>Resuelto en 0.001 seg</Message>
                  <Row>
                    <Check><Box type="checkbox" defaultChecked />Actualizar automáticamente</Check>
                    <WideButton>Actualizar</WideButton>
                  </Row>
                </SolverBody>
              </Section>
              <Section><SectionTitle>Controles de edición</SectionTitle></Section>
              <Section $fill>
                <SectionTitle>Restricciones</SectionTitle>
                <FilterBody>
                  <FilterRow>
                    <label htmlFor="filter">Filtro:</label>
                    <Combo><select id="filter"><option>Todo</option></select></Combo>
                  </FilterRow>
                  <Check><Box type="checkbox" defaultChecked />Hide Internal Alignment</Check>
                  <Check><Box type="checkbox" defaultChecked />Extended Information</Check>
                  <ListFrame>
                    <List>
                      {constraints.map(([name, tangent]) => (
                        <li key={name}>
                          <Check><Box type="checkbox" defaultChecked /><Svg s={16}>{tangent ? <Tangent /> : <Corner />}</Svg>{name}</Check>
                        </li>
                      ))}
                    </List>
                    <Track><Thumb $h="18px" /></Track>
                  </ListFrame>
                </FilterBody>
              </Section>
            </Tasks>
            <Track><Thumb $h="53%" /></Track>
          </TaskArea>
        </Dock>
        <Mdi>
          <Scene><Viewport /></Scene>
          <DocBar>
            <DocTab>
              <Svg s={11}>
                <path d="M2 1H12V5H6V7H10V10H6V15H2Z" fill="#c4161c" />
                <circle cx="11" cy="11" r="3.200" stroke="#34609c" strokeWidth="2.600" />
                <circle cx="11" cy="11" r="4.600" stroke="#34609c" strokeWidth="1.200" strokeDasharray="2 1.600" />
              </Svg>
              <span>kuncxarpento_parametric : 1*</span>
              <PlainButton aria-label="Cerrar documento">
                <Svg s={10}><path d="M2.500 2.500 13.500 13.500M13.500 2.500 2.500 13.500" stroke="#8b8b89" strokeWidth="4.500" /></Svg>
              </PlainButton>
            </DocTab>
          </DocBar>
        </Mdi>
      </Work>
    </Window>
  );
}
